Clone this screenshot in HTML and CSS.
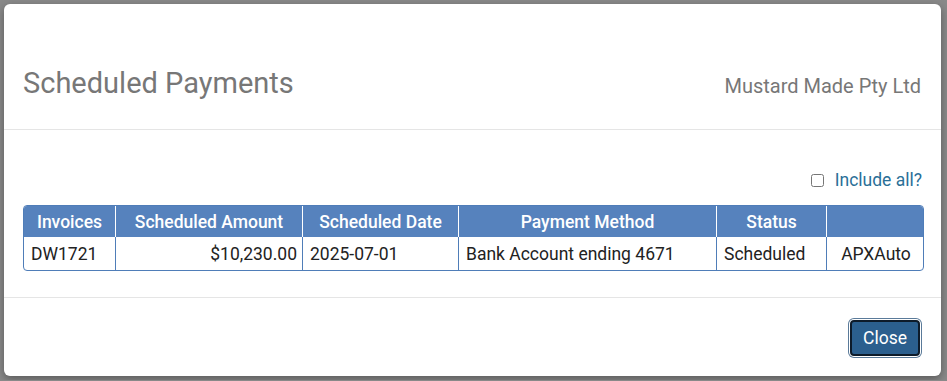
FILE: index.html
```html
<!DOCTYPE html>
<html lang="en">
<head>
  <meta charset="UTF-8">
  <meta name="viewport" content="width=device-width, initial-scale=1.0">
  <title>Scheduled Payments</title>
  <link rel="stylesheet" href="styles.css">
</head>
<body>
  <div class="modal">
    <div class="modal_header">
      <h4 class="modal_title">Scheduled Payments</h4>
      <span class="company">Mustard Made Pty Ltd</span>
    </div>

    <div class="modal_body">
      <div class="include_row">
        <label class="include_label"><input type="checkbox" id="include_all"/><span>Include all?</span></label>
      </div>

      <table class="payments">
        <colgroup>
          <col style="width: 91px">
          <col style="width: 187px">
          <col style="width: 156px">
          <col style="width: 258px">
          <col style="width: 110px">
          <col style="width: 97px">
        </colgroup>
        <thead>
          <tr>
            <th>Invoices</th>
            <th>Scheduled Amount</th>
            <th>Scheduled Date</th>
            <th>Payment Method</th>
            <th>Status</th>
            <th></th>
          </tr>
        </thead>
        <tbody>
          <tr>
            <td>DW1721</td>
            <td class="amount">$10,230.00</td>
            <td>2025-07-01</td>
            <td>Bank Account ending 4671</td>
            <td>Scheduled</td>
            <td class="center">APXAuto</td>
          </tr>
        </tbody>
      </table>
    </div>

    <div class="modal_footer">
      <button class="btn_close">Close</button>
    </div>
  </div>
</body>
</html>
```

FILE: styles.css
```css
* {
  font-family: Roboto, 'Liberation Sans', Arial, sans-serif;
  box-sizing: border-box;
}

body {
  margin: 0;
  padding: 4px;
  background: #898989;
}

.modal {
  width: 937px;
  height: 372px;
  background: #fff;
  border-radius: 6px;
  box-shadow: 0 3px 9px rgba(0, 0, 0, 0.35);
  display: flex;
  flex-direction: column;
}

.modal_header {
  display: flex;
  flex-direction: row;
  justify-content: space-between;
  align-items: baseline;
  padding: 62px 20px 0 19px;
  height: 126px;
  border-bottom: 1px solid #e5e5e5;
}

.modal_title {
  margin: 0;
  font-size: 29px;
  font-weight: 400;
  line-height: 35px;
  color: #777;
}

.company {
  font-size: 20px;
  color: #777;
}

.modal_body {
  padding: 0 19px 0 19px;
  height: 168px;
  border-bottom: 1px solid #e5e5e5;
}

.include_row {
  display: flex;
  justify-content: flex-end;
  padding: 40px 0 0 0;
  height: 75px;
}

.include_label {
  display: flex;
  align-items: center;
  height: 20px;
  font-size: 17.5px;
  color: #2a6f97;
}

.include_label input {
  margin: 0 11px 0 0;
  width: 13px;
  height: 13px;
}

.payments {
  width: 899px;
  table-layout: fixed;
  border-collapse: separate;
  border-spacing: 0;
  border: 1px solid #4f7db8;
  border-radius: 4px;
  font-size: 17.5px;
}

.payments th {
  background: #5682bd;
  color: #fff;
  font-weight: 500;
  height: 31px;
  padding: 0 4px;
  text-align: center;
  border-left: 1px solid #fff;
}

.payments th:first-child {
  border-left: none;
  border-top-left-radius: 3px;
}

.payments th:last-child {
  border-top-right-radius: 3px;
}

.payments td {
  height: 33px;
  padding: 0 5px 0 7px;
  color: #222;
  border-left: 1px solid #4f7db8;
}

.payments td:first-child {
  border-left: none;
}

.payments .amount {
  text-align: right;
}

.payments .center {
  text-align: center;
}

.modal_footer {
  display: flex;
  justify-content: flex-end;
  padding: 22px 21px 0 0;
}

.btn_close {
  width: 70px;
  height: 36px;
  background: #2b5f8e;
  color: #fff;
  font-size: 17.5px;
  border: 2px solid #0d1b2a;
  border-radius: 4px;
  box-shadow: 0 0 0 1px #fff, 0 0 0 2px #5a7a99;
}
```
